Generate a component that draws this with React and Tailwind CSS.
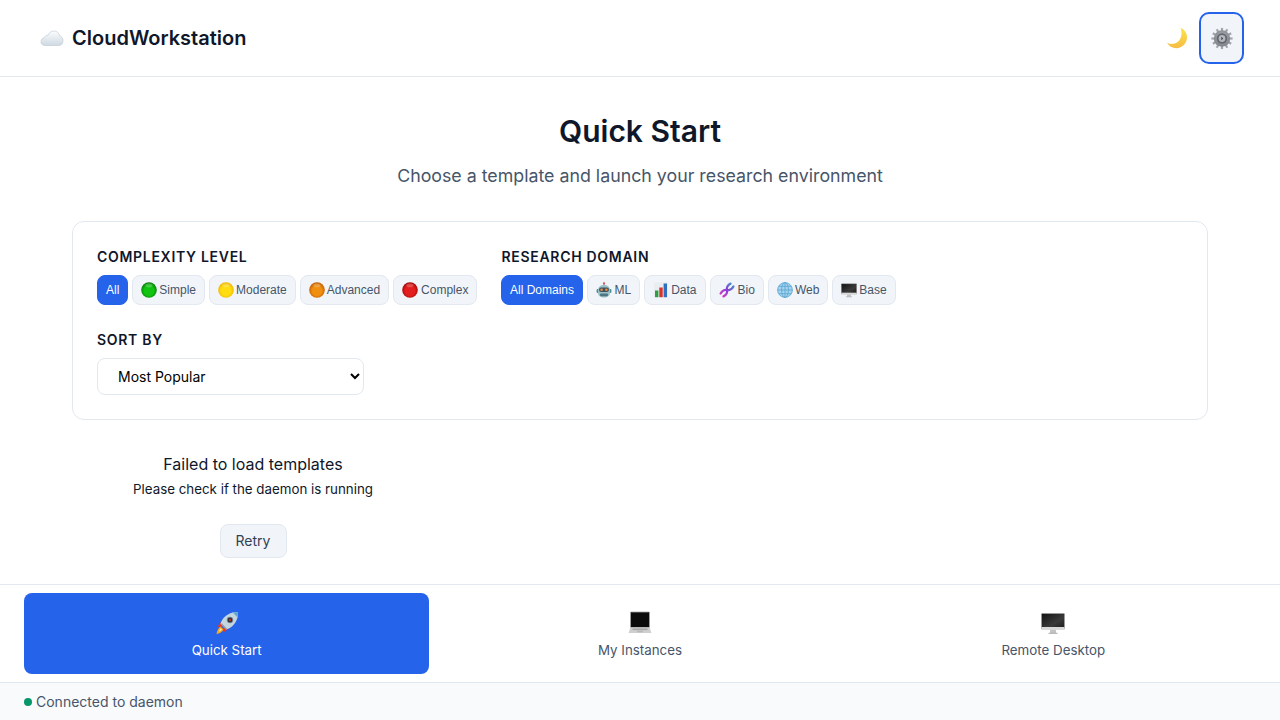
import React from "react";

// Emoji drawn by hand, the sandbox has no colour emoji font
function Ball({ id, light, dark }) {
    return (
        <svg viewBox="0 0 16 16" className="w-4 h-4 shrink-0">
            <defs>
                <radialGradient id={id} cx="50%" cy="55%" r="55%">
                    <stop offset="0%" stopColor={light} />
                    <stop offset="55%" stopColor={light} />
                    <stop offset="100%" stopColor={dark} />
                </radialGradient>
            </defs>
            <circle cx="8" cy="8" r="7.800" fill={`url(#${id})`} />
            <ellipse cx="8" cy="3.400" rx="3.600" ry="1.800" fill="#ffffff" opacity="0.22" />
        </svg>
    );
}

function Cloud() {
    return (
        <svg viewBox="0 0 24 16" className="w-6 h-4">
            <defs>
                <linearGradient id="cloudFill" x1="0" y1="0" x2="0" y2="1">
                    <stop offset="0%" stopColor="#fbfdfe" />
                    <stop offset="100%" stopColor="#cfd9e2" />
                </linearGradient>
            </defs>
            <path d="M5 15.500C2 15.500 1 13.600 1 11.600 1 9.500 2.300 8 4.300 7.800 4.900 6 6.200 5 8 5.300 9 2.600 11.300 1 14 1c3 0 5.300 2.100 5.600 5 2 .4 3.400 2.300 3.400 4.700 0 2.700-1.700 4.800-4.200 4.800z" fill="url(#cloudFill)" stroke="#c2cdd8" strokeWidth="0.700" />
        </svg>
    );
}

function Moon() {
    return (
        <svg viewBox="0 0 22 22" className="w-[22px] h-[22px]">
            <defs>
                <linearGradient id="moonFill" x1="0" y1="0" x2="0" y2="1">
                    <stop offset="0%" stopColor="#fce24a" />
                    <stop offset="100%" stopColor="#f6bd45" />
                </linearGradient>
            </defs>
            <path d="M14.500 .8c3.800 1.600 6.500 5 6.500 9.500 0 6-4.800 10.900-10.700 10.900-4 0-7.400-2.100-9.300-5.400 4 2 8.300 1.400 11.200-1.300C15.500 11.500 16.500 6 14.500 .8z" fill="url(#moonFill)" />
        </svg>
    );
}

function Gear() {
    const teeth = [0, 30, 60, 90, 120, 150, 180, 210, 240, 270, 300, 330];
    return (
        <svg viewBox="0 0 22 22" className="w-[22px] h-[22px] translate-y-[0.5px]">
            <defs>
                <radialGradient id="gearFill" cx="50%" cy="40%" r="60%">
                    <stop offset="0%" stopColor="#aeb2b8" />
                    <stop offset="100%" stopColor="#7d8188" />
                </radialGradient>
            </defs>
            {teeth.map((a) => (
                <rect key={a} x="9.900" y="0.400" width="2.200" height="5" fill="#a2a6ac" transform={`rotate(${a} 11 11)`} />
            ))}
            <circle cx="11" cy="11" r="8.200" fill="url(#gearFill)" />
            <circle cx="11" cy="11" r="5.200" fill="#63676e" />
            <circle cx="11" cy="11" r="3.400" fill="#b4b8bd" />
            <path d="M10.400 9.200l1.700 1.800-1.700 1.800z" fill="#33363b" />
        </svg>
    );
}

function Robot() {
    return (
        <svg viewBox="0 0 16 16" className="w-4 h-4 shrink-0">
            <rect x="7.400" y="0.600" width="1.200" height="3" fill="#8a949c" />
            <circle cx="8" cy="1.400" r="1.100" fill="#e0584f" />
            <rect x="0.600" y="7" width="2" height="4" rx="1" fill="#4d8a98" />
            <rect x="13.400" y="7" width="2" height="4" rx="1" fill="#4d8a98" />
            <path d="M2 8c0-3 2.500-5 6-5s6 2 6 5v3c0 2.800-2.500 4.500-6 4.500S2 13.800 2 11z" fill="#9cc0c9" />
            <rect x="3" y="5.500" width="10" height="4.500" rx="2.200" fill="#3c5560" />
            <circle cx="5.600" cy="7.700" r="1.300" fill="#ef8a3c" />
            <circle cx="10.400" cy="7.700" r="1.300" fill="#ef8a3c" />
            <rect x="4" y="11.600" width="8" height="2.600" rx="1" fill="#4f7683" />
        </svg>
    );
}

function Chart() {
    return (
        <svg viewBox="0 0 16 16" className="w-4 h-4 shrink-0">
            <rect x="1" y="0.300" width="14" height="15.400" fill="#e9edf0" />
            <rect x="2" y="8.500" width="3.400" height="6.700" fill="#2f9e44" />
            <rect x="6.300" y="5.500" width="3.400" height="9.700" fill="#d8322a" />
            <rect x="10.600" y="1.500" width="3.400" height="13.700" fill="#2f6fbf" />
        </svg>
    );
}

function Dna() {
    return (
        <svg viewBox="0 0 16 16" className="w-4 h-4 shrink-0" fill="none">
            <defs>
                <linearGradient id="dnaStrand" gradientUnits="userSpaceOnUse" x1="1" y1="15" x2="15" y2="1">
                    <stop offset="0%" stopColor="#e23cc0" />
                    <stop offset="50%" stopColor="#8a3fd8" />
                    <stop offset="100%" stopColor="#3aa0c8" />
                </linearGradient>
            </defs>
            <path d="M1.600 11.500C3 8.500 6 7.500 8 8c2 .5 5-.5 6.400-3.500" stroke="url(#dnaStrand)" strokeWidth="2.300" strokeLinecap="round" />
            <path d="M4.500 14.400C7.500 13 8.500 10 8 8c-.5-2 .5-5 3.500-6.400" stroke="url(#dnaStrand)" strokeWidth="2.300" strokeLinecap="round" />
        </svg>
    );
}

function Globe() {
    return (
        <svg viewBox="0 0 16 16" className="w-4 h-4 shrink-0" fill="none">
            <circle cx="8" cy="8" r="7.600" fill="#a5d4ee" />
            <g stroke="#4f9fcf" strokeWidth="0.700">
                <circle cx="8" cy="8" r="7.400" />
                <ellipse cx="8" cy="8" rx="3.400" ry="7.400" />
                <path d="M8 .6v14.800M.6 8h14.800M1.800 4.300h12.400M1.800 11.700h12.400" />
            </g>
        </svg>
    );
}

function Desktop({ big }) {
    const id = big ? "screenBig" : "screenSmall";
    return (
        <svg viewBox="0 0 24 24" className={big ? "w-6 h-6 shrink-0" : "w-4 h-4 shrink-0"}>
            <defs>
                <linearGradient id={id} x1="0" y1="0" x2="1" y2="1">
                    <stop offset="0%" stopColor="#111111" />
                    <stop offset="60%" stopColor="#3a3a3a" />
                    <stop offset="100%" stopColor="#1a1a1a" />
                </linearGradient>
            </defs>
            <rect x="0.500" y="2.500" width="23" height="15.500" rx="0.800" fill={`url(#${id})`} stroke="#a0a0a0" strokeWidth="0.600" />
            <rect x="0.500" y="16" width="23" height="2.800" fill="#d9d9d9" />
            <rect x="9" y="18.800" width="6" height="3.200" fill="#c4c4c4" />
            <rect x="7.500" y="21.800" width="9" height="1" fill="#a8a8a8" />
        </svg>
    );
}

function Laptop() {
    return (
        <svg viewBox="0 0 24 24" className="w-6 h-6 shrink-0">
            <rect x="2.500" y="1" width="19" height="15.500" rx="0.600" fill="#0b0b0b" stroke="#a5a5a5" strokeWidth="0.800" />
            <path d="M2.500 16.500h19L23.500 22H.5z" fill="#cfcfcf" />
            <rect x="4.500" y="17.500" width="15" height="1.600" fill="#a8a8a8" />
            <rect x="9" y="19.500" width="6" height="1.800" fill="#bababa" />
        </svg>
    );
}

function Rocket() {
    return (
        <svg viewBox="0 0 24 24" className="w-6 h-6 shrink-0">
            <path d="M2.500 15.500l4-5 3.500 1-3.500 5.500z" fill="#e5352b" />
            <path d="M8.500 21.500l5-4-.7-3.500-5.800 3.500z" fill="#e5352b" />
            <path d="M5.500 15.500c-2 1.500-3.500 4-4 7.500 3.500-.5 5.500-2 7-4.500z" fill="#f8a81d" />
            <path d="M6 17.500c-1 .6-1.700 1.700-2 3 1.200-.3 2.200-1.200 2.800-2.300z" fill="#fff2b0" />
            <path d="M23 1c-5-.4-10.500 1.600-14 5.500-1.800 2-3 4.300-3.500 6.500l5.500 5.500c2.200-.5 4.500-1.700 6.500-3.500C21.400 11.500 23.400 6 23 1z" fill="#c3d6df" />
            <path d="M23 1c-1.800-.1-3.600.1-5.300.6l4.700 4.700c.5-1.700.7-3.500.6-5.300z" fill="#5fa9cf" />
            <path d="M6 13.500l5 5 1.200-.6-5.600-5.600z" fill="#7f9aa8" />
            <circle cx="15" cy="9" r="2.900" fill="#2c2f38" stroke="#7f93a0" strokeWidth="0.800" />
            <circle cx="15" cy="9" r="1.200" fill="#b5302a" />
        </svg>
    );
}

function Pill({ active, icon, label, gap = "gap-[3px]", pad = "px-2" }) {
    const look = active
        ? "bg-[#2563eb] border-[#2563eb] text-white"
        : "bg-[#f1f5f9] border-[#e2e8f0] text-[#475569]";
    return (
        <button className={`h-[30px] ${pad} rounded-lg border flex items-center ${gap} text-xs font-['Liberation_Sans',sans-serif] ${look}`}>
            {icon}
            <span>{label}</span>
        </button>
    );
}

function FilterLabel({ children }) {
    return <div className="text-sm leading-[17px] font-semibold tracking-[0.05em] uppercase text-[#0f172a]">{children}</div>;
}

function NavTab({ active, icon, label }) {
    return (
        <button className={`flex-1 basis-0 h-[81px] rounded-lg flex flex-col items-center justify-center gap-[7px] pt-[2px] text-[13.33px] ${active ? "bg-[#2563eb] text-white" : "text-[#475569]"}`}>
            {icon}
            <span className="leading-[17px]">{label}</span>
        </button>
    );
}

export default function App() {
    return (
        <div className="h-screen flex flex-col overflow-hidden bg-white font-['Inter',sans-serif]">
            <header className="h-[77px] shrink-0 border-b border-[#e2e8f0] flex items-center justify-between pl-10 pr-9">
                <div className="flex items-center gap-2">
                    <Cloud />
                    <span className="text-xl font-semibold text-[#0f172a]">CloudWorkstation</span>
                </div>
                <div className="flex items-center gap-[11px]">
                    <Moon />
                    <button className="w-[45px] h-[52px] rounded-[10px] border-2 border-[#2563eb] bg-[#f1f5f9] flex items-center justify-center">
                        <Gear />
                    </button>
                </div>
            </header>

            <main className="flex-1 min-h-0 px-[72px]">
                <h1 className="mt-[33px] text-3xl leading-[42px] font-semibold text-center text-[#0f172a]">Quick Start</h1>
                <p className="mt-[12px] text-[17.8px] leading-[24px] text-center text-[#475569]">Choose a template and launch your research environment</p>

                <section className="mt-[33px] h-[199px] rounded-xl border border-[#e2e8f0] bg-white px-6 pt-[26px]">
                    <div className="flex gap-6">
                        <div>
                            <FilterLabel>Complexity Level</FilterLabel>
                            <div className="mt-[10px] flex gap-1">
                                <Pill active label="All" />
                                <Pill icon={<Ball id="ballGreen" light="#12c412" dark="#067a06" />} label="Simple" gap="gap-[2px]" />
                                <Pill icon={<Ball id="ballYellow" light="#ffdd10" dark="#eeb400" />} label="Moderate" gap="gap-[2px]" />
                                <Pill icon={<Ball id="ballOrange" light="#f09010" dark="#c05a00" />} label="Advanced" gap="gap-[2px]" />
                                <Pill icon={<Ball id="ballRed" light="#e41e1e" dark="#9e0808" />} label="Complex" />
                            </div>
                        </div>
                        <div>
                            <FilterLabel>Research Domain</FilterLabel>
                            <div className="mt-[10px] flex gap-1">
                                <Pill active label="All Domains" pad="px-[7.5px]" />
                                <Pill icon={<Robot />} label="ML" />
                                <Pill icon={<Chart />} label="Data" gap="gap-[2px]" />
                                <Pill icon={<Dna />} label="Bio" />
                                <Pill icon={<Globe />} label="Web" gap="gap-[2px]" />
                                <Pill icon={<Desktop />} label="Base" gap="gap-[2px]" />
                            </div>
                        </div>
                    </div>
                    <div className="mt-[26px]">
                        <FilterLabel>Sort By</FilterLabel>
                        <select className="mt-[10px] block w-[267px] h-[37px] rounded-lg border border-[#e2e8f0] bg-white pl-4 pr-1 text-sm text-black">
                            <option>Most Popular</option>
                            <option>Newest</option>
                            <option>Name</option>
                        </select>
                    </div>
                </section>

                <div className="w-[362px] flex flex-col items-center text-center">
                    <p className="mt-[34px] text-base leading-[20px] text-[#0f172a]">Failed to load templates</p>
                    <p className="mt-[5px] text-[13.33px] leading-[20px] text-[#0f172a]">Please check if the daemon is running</p>
                    <button className="mt-[25px] h-[34px] w-[67px] rounded-lg border border-[#e2e8f0] bg-[#f1f5f9] text-sm text-[#334155]">Retry</button>
                </div>
            </main>

            <nav className="h-[98px] shrink-0 border-t border-[#e2e8f0] bg-white px-6 pt-2 flex gap-2">
                <NavTab active icon={<Rocket />} label="Quick Start" />
                <NavTab icon={<Laptop />} label="My Instances" />
                <NavTab icon={<Desktop big />} label="Remote Desktop" />
            </nav>

            <footer className="h-[38px] shrink-0 border-t border-[#e2e8f0] bg-[#f8fafc] px-6 flex items-center gap-1 text-sm text-[#475569]">
                <span className="w-2 h-2 rounded-full bg-[#059669]"></span>
                <span>Connected to daemon</span>
            </footer>
        </div>
    );
}
